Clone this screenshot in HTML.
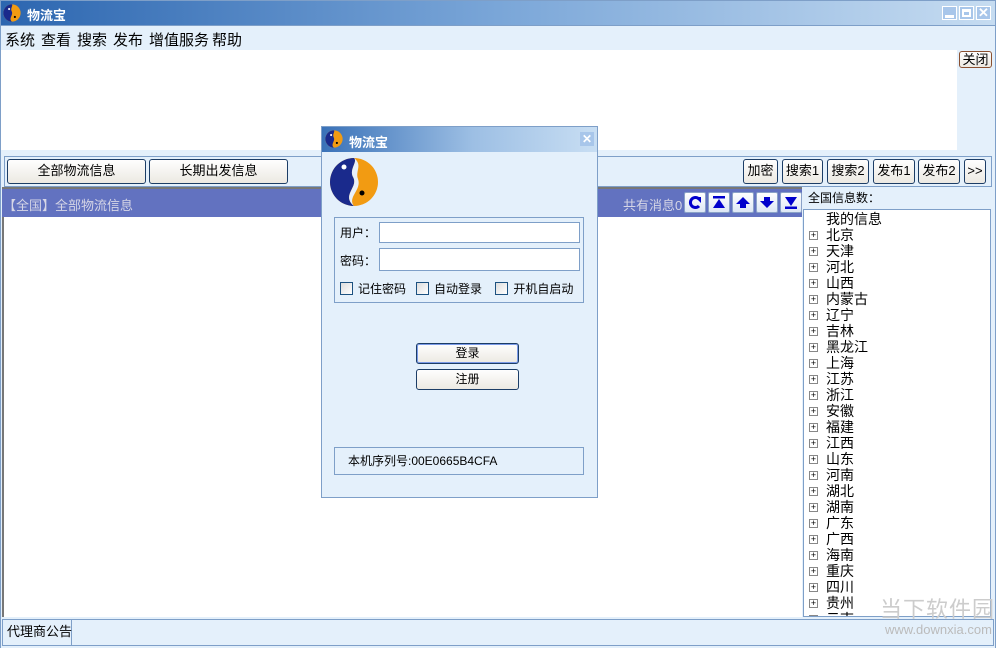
<!DOCTYPE html>
<html><head><meta charset="utf-8"><style>
*{margin:0;padding:0;box-sizing:border-box}
body{width:996px;height:648px;position:relative;overflow:hidden;background:#e4f0fb;font-family:"Liberation Sans","Noto Sans CJK SC","WenQuanYi Zen Hei",sans-serif;font-size:13px;color:#000}
.a{position:absolute;white-space:nowrap}
.btn{position:absolute;background:linear-gradient(#fefefe,#ece9e2);border:1px solid #1c3d66;border-radius:3px;text-align:center;font-size:13px;line-height:22px;white-space:nowrap}
.ib{position:absolute;top:192px;width:22px;height:21px;background:linear-gradient(#fff,#dde7f5);border:1px solid #8aa2c8;border-radius:2px}
.tree div{height:16px;line-height:16px;font-size:14px;position:relative;padding-left:22px}
.pl{position:absolute;left:5px;top:4px;width:9px;height:9px;border:1px solid #888;background:#fff;font-size:9px;line-height:7px;text-align:center}
.cb{display:inline-block;width:13px;height:13px;border:1px solid #1c5180;background:linear-gradient(135deg,#ddd,#fff);vertical-align:-2px;margin-right:5px}
.m span{position:absolute;top:0}
</style></head><body>
<div class="a" style="left:0;top:0;width:996px;height:26px;background:linear-gradient(90deg,#2c66b0,#7aa6d8 50%,#c6dcf1);border:1px solid #7e9fc8"></div>
<svg class="a" style="left:3px;top:4px" width="18" height="18" viewBox="0 0 50 50"><circle cx="25" cy="25" r="24" fill="#f29b12"/><path d="M25 1A24 24 0 0 0 25 49C14 40 30 30 24 20 20 12 28 5 25 1Z" fill="#1a2a8c"/><circle cx="17" cy="14" r="3" fill="#fff"/><circle cx="33" cy="36" r="3" fill="#000"/></svg>
<div class="a" style="left:27px;top:5px;color:#fff;font-weight:bold;font-size:13px">物流宝</div>
<div class="a" style="left:942px;top:6px;width:15px;height:14px;background:#a8c6ea;border:1px solid #fff"><div class="a" style="left:2px;top:8px;width:9px;height:3px;background:#fff"></div></div>
<div class="a" style="left:959px;top:6px;width:15px;height:14px;background:#a8c6ea;border:1px solid #fff"><div class="a" style="left:2px;top:2px;width:9px;height:8px;border:2px solid #fff;border-top-width:3px"></div></div>
<div class="a" style="left:976px;top:6px;width:15px;height:14px;background:#a8c6ea;border:1px solid #fff;color:#fff;font-weight:bold;font-size:13px;line-height:12px;text-align:center">✕</div>
<div class="a m" style="left:0;top:29px;font-size:15px;width:300px;height:20px"><span style="left:5px">系统</span><span style="left:41px">查看</span><span style="left:77px">搜索</span><span style="left:113px">发布</span><span style="left:149px">增值服务</span><span style="left:212px">帮助</span></div>
<div class="a" style="left:1px;top:50px;width:956px;height:100px;background:#fff"></div>
<div class="a" style="left:0;top:26px;width:1px;height:622px;background:#7e9fc8"></div>
<div class="a" style="left:995px;top:26px;width:1px;height:622px;background:#7e9fc8"></div>
<div class="btn" style="left:959px;top:51px;width:33px;height:17px;line-height:15px;border-color:#8a5030">关闭</div>
<div class="a" style="left:4px;top:156px;width:988px;height:31px;border:1px solid #7e9fc8"></div>
<div class="btn" style="left:7px;top:159px;width:139px;height:25px">全部物流信息</div>
<div class="btn" style="left:149px;top:159px;width:139px;height:25px">长期出发信息</div>
<div class="btn" style="left:743px;top:159px;width:35px;height:25px">加密</div>
<div class="btn" style="left:782px;top:159px;width:41px;height:25px">搜索1</div>
<div class="btn" style="left:827px;top:159px;width:42px;height:25px">搜索2</div>
<div class="btn" style="left:873px;top:159px;width:42px;height:25px">发布1</div>
<div class="btn" style="left:918px;top:159px;width:42px;height:25px">发布2</div>
<div class="btn" style="left:964px;top:159px;width:22px;height:25px">&gt;&gt;</div>
<div class="a" style="left:2px;top:187px;width:800px;height:30px;background:#6272c0;border-top:2px solid #777"></div>
<div class="a" style="left:3px;top:195px;color:#d6d6e6;font-size:13px">【全国】全部物流信息</div>
<div class="a" style="left:623px;top:195px;color:#d6d6e6;font-size:13px">共有消息0</div>
<div class="ib" style="left:684px"><svg width="20" height="19"><path d="M14 6A5 5 0 1 0 14 13" stroke="#00c" stroke-width="3" fill="none"/><path d="M10 4L16 4 16 10Z" fill="#00c"/></svg></div>
<div class="ib" style="left:708px"><svg width="20" height="19"><rect x="4" y="3" width="12" height="2.5" fill="#00c"/><path d="M10 6L16 15 4 15Z" fill="#00c"/></svg></div>
<div class="ib" style="left:732px"><svg width="20" height="19"><path d="M10 4L17 11 13 11 13 15 7 15 7 11 3 11Z" fill="#00c"/></svg></div>
<div class="ib" style="left:756px"><svg width="20" height="19"><path d="M10 15L17 8 13 8 13 4 7 4 7 8 3 8Z" fill="#00c"/></svg></div>
<div class="ib" style="left:780px"><svg width="20" height="19"><path d="M10 13L16 4 4 4Z" fill="#00c"/><rect x="4" y="13.5" width="12" height="2.5" fill="#00c"/></svg></div>
<div class="a" style="left:2px;top:217px;width:800px;height:400px;background:#fff;border-left:2px solid #777"></div>
<div class="a" style="left:808px;top:189px;font-size:12px">全国信息数：</div>
<div class="a tree" style="left:803px;top:209px;width:188px;height:408px;background:#fff;border:1px solid #7e9fc8;overflow:hidden;padding-top:1px">
<div>我的信息</div>
<div><span class="pl">+</span>北京</div><div><span class="pl">+</span>天津</div><div><span class="pl">+</span>河北</div><div><span class="pl">+</span>山西</div><div><span class="pl">+</span>内蒙古</div><div><span class="pl">+</span>辽宁</div><div><span class="pl">+</span>吉林</div><div><span class="pl">+</span>黑龙江</div><div><span class="pl">+</span>上海</div><div><span class="pl">+</span>江苏</div><div><span class="pl">+</span>浙江</div><div><span class="pl">+</span>安徽</div><div><span class="pl">+</span>福建</div><div><span class="pl">+</span>江西</div><div><span class="pl">+</span>山东</div><div><span class="pl">+</span>河南</div><div><span class="pl">+</span>湖北</div><div><span class="pl">+</span>湖南</div><div><span class="pl">+</span>广东</div><div><span class="pl">+</span>广西</div><div><span class="pl">+</span>海南</div><div><span class="pl">+</span>重庆</div><div><span class="pl">+</span>四川</div><div><span class="pl">+</span>贵州</div><div><span class="pl">+</span>云南</div>
<div class="a" style="left:168px;top:0;width:18px;height:406px;background:#f0f0f0"><div class="a" style="left:1px;top:18px;width:16px;height:290px;background:linear-gradient(90deg,#eee,#ccc);border:1px solid #bbb;border-radius:2px"></div></div>
</div>
<div class="a" style="left:2px;top:619px;width:992px;height:27px;border:1px solid #7e9fc8"></div>
<div class="a" style="left:2px;top:619px;width:70px;height:27px;border-right:1px solid #7e9fc8;line-height:26px;padding-left:5px;font-size:13px">代理商公告</div>
<div class="a" style="left:880px;top:592px;color:#ccc;font-size:22px;letter-spacing:1px">当下软件园</div>
<div class="a" style="left:885px;top:622px;color:#bbb;font-size:13px">www.downxia.com</div>
<div class="a" style="left:321px;top:126px;width:277px;height:372px;background:#e4f0fb;border:1px solid #7e9fc8"></div>
<div class="a" style="left:322px;top:127px;width:275px;height:25px;background:linear-gradient(90deg,#3a72b8,#9dbfe4 55%,#c8def3)"></div>
<svg class="a" style="left:325px;top:130px" width="18" height="18" viewBox="0 0 50 50"><circle cx="25" cy="25" r="24" fill="#f29b12"/><path d="M25 1A24 24 0 0 0 25 49C14 40 30 30 24 20 20 12 28 5 25 1Z" fill="#1a2a8c"/><circle cx="17" cy="14" r="3" fill="#fff"/><circle cx="33" cy="36" r="3" fill="#000"/></svg>
<div class="a" style="left:349px;top:132px;color:#fff;font-weight:bold;font-size:13px">物流宝</div>
<div class="a" style="left:580px;top:132px;width:14px;height:14px;background:#a8c6ea;color:#fff;font-weight:bold;font-size:12px;line-height:14px;text-align:center">✕</div>
<svg class="a" style="left:329px;top:157px" width="50" height="50" viewBox="0 0 50 50"><circle cx="25" cy="25" r="24" fill="#f29b12"/><path d="M25 1A24 24 0 0 0 25 49C12 38 30 30 24 20 20 12 29 5 25 1Z" fill="#1a2a8c"/><path d="M25 49C12 38 30 30 24 20 20 12 29 5 25 1C34 8 26 14 29 22 33 33 18 40 25 49Z" fill="#e8f0fa"/><circle cx="15" cy="10" r="2.5" fill="#fff"/><circle cx="33" cy="36" r="2.5" fill="#000"/></svg>
<div class="a" style="left:334px;top:217px;width:250px;height:86px;border:1px solid #7e9fc8"></div>
<div class="a" style="left:340px;top:224px;font-size:12px">用户：</div>
<div class="a" style="left:340px;top:252px;font-size:12px">密码：</div>
<div class="a" style="left:379px;top:222px;width:201px;height:21px;background:#fff;border:1px solid #7e9fc8"></div>
<div class="a" style="left:379px;top:248px;width:201px;height:23px;background:#fff;border:1px solid #7e9fc8"></div>
<div class="a" style="left:340px;top:280px;font-size:12px"><span class="cb"></span>记住密码&nbsp;&nbsp;&nbsp;<span class="cb"></span>自动登录&nbsp;&nbsp;&nbsp;&nbsp;<span class="cb"></span>开机自启动</div>
<div class="btn" style="left:416px;top:343px;width:103px;height:21px;line-height:19px;font-size:12px;box-shadow:inset 0 0 0 1px #7a9ae8">登录</div>
<div class="btn" style="left:416px;top:369px;width:103px;height:21px;line-height:19px;font-size:12px">注册</div>
<div class="a" style="left:334px;top:447px;width:250px;height:28px;border:1px solid #7e9fc8;line-height:26px;padding-left:13px;font-size:12px">本机序列号:00E0665B4CFA</div>
</body></html>
